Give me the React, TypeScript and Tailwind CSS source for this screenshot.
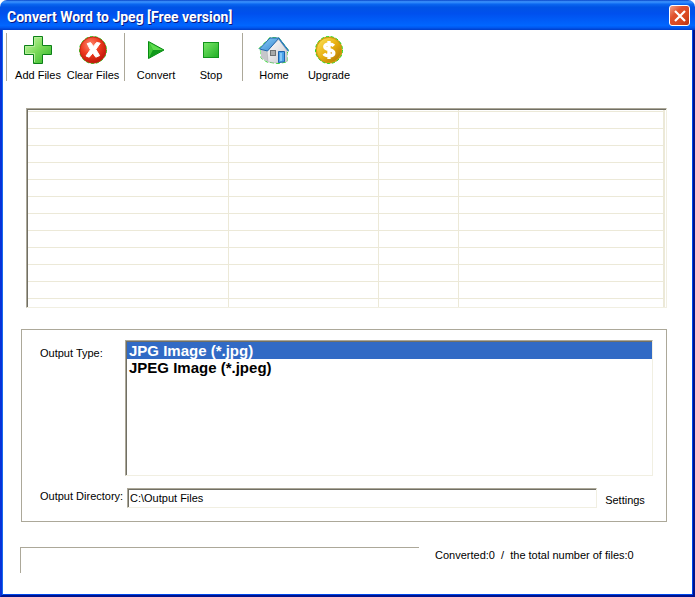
import { useState, type ReactNode } from "react";

function AddIcon() {
  return (
    <svg viewBox="0 0 28 28" className="h-7 w-7 shrink-0">
      <defs>
        <linearGradient id="add" x1="0" y1="0" x2="1" y2="1">
          <stop offset="0" stopColor="#d2f8b4" />
          <stop offset="0.5" stopColor="#7ada58" />
          <stop offset="1" stopColor="#2fb32a" />
        </linearGradient>
      </defs>
      <path d="M9.5.5h9v9h9v9h-9v9h-9v-9h-9v-9h9z" fill="url(#add)" stroke="#0c8018" />
      <path d="M10.5 26V17.5h-9v-7h9v-9h7" fill="none" stroke="#b4ee98" />
    </svg>
  );
}

function ClearIcon() {
  return (
    <svg viewBox="0 0 28 28" className="h-7 w-7 shrink-0">
      <defs>
        <radialGradient id="clear" cx="0.4" cy="0.3" r="0.75">
          <stop offset="0" stopColor="#ff8a70" />
          <stop offset="0.5" stopColor="#ee3a1e" />
          <stop offset="1" stopColor="#b91206" />
        </radialGradient>
      </defs>
      <circle cx="14" cy="14" r="13.5" fill="#c22a14" stroke="#1fdc1f" strokeDasharray="3 2" />
      <circle cx="14" cy="14" r="13" fill="url(#clear)" stroke="#c22a14" strokeWidth="0.8" />
      <path
        d="M8.2 7.6 11.6 6.6 14.4 10.4 17.6 6.4 21.2 7.2 16.8 13.4 20.6 19.6 16.8 21.2 13.8 17 10.2 21.2 7 20 11.4 13.8z"
        fill="#fff"
        stroke="#fff"
        strokeLinejoin="round"
      />
    </svg>
  );
}

function ConvertIcon() {
  return (
    <svg viewBox="0 0 28 28" className="h-7 w-7 shrink-0">
      <path d="M6.5 5.5 22 14 6.5 22.5z" fill="#28b428" stroke="#078a12" strokeLinejoin="round" />
      <path d="M7 6.5 11 14 20.5 14z" fill="#5fdc50" />
      <path d="M7 6.5v15L11 14z" fill="#43c93a" />
      <path d="M7 22 11 14h10z" fill="#119a1c" />
    </svg>
  );
}

function StopIcon() {
  return (
    <svg viewBox="0 0 28 28" className="h-7 w-7 shrink-0">
      <defs>
        <linearGradient id="stop" x1="0" y1="0" x2="1" y2="1">
          <stop offset="0" stopColor="#7be868" />
          <stop offset="1" stopColor="#1fae25" />
        </linearGradient>
      </defs>
      <rect x="6.5" y="6.5" width="15" height="15" fill="url(#stop)" stroke="#12941c" />
    </svg>
  );
}

function HomeIcon() {
  return (
    <svg viewBox="0 0 32 28" className="h-7 w-8 shrink-0">
      <defs>
        <linearGradient id="wall" x1="0" y1="0" x2="1" y2="1">
          <stop offset="0" stopColor="#ffffff" />
          <stop offset="1" stopColor="#c8c8cc" />
        </linearGradient>
        <linearGradient id="roof" x1="0" y1="0" x2="1" y2="1">
          <stop offset="0" stopColor="#8fd0fa" />
          <stop offset="1" stopColor="#3384cf" />
        </linearGradient>
      </defs>
      <path d="M1 12.5 12 1.5 21 2l10 13-2 2v9l-9 1.5L9 26l-6-4v-6.5z" fill="none" stroke="#1fdc1f" strokeDasharray="4 2" />
      <path d="M3 14v8l7 4V12z" fill="#c6c7ca" />
      <path d="M9 14 21 3.5l8 11.5v10.5L19 27l-9-1z" fill="url(#wall)" stroke="#a2a4a8" strokeWidth="0.5" />
      <path d="M1.5 13 12 2h9L9.5 15z" fill="url(#roof)" stroke="#2166aa" />
      <path d="m20.5 2 10 13" fill="none" stroke="#2a78bd" strokeWidth="1.4" />
      <rect x="12.5" y="14.5" width="5" height="5" fill="#a7a9a9" stroke="#6f7274" />
      <path d="M20.5 15.5h6v10.3l-6 .7z" fill="#4ba2ea" stroke="#1b62ad" />
      <path d="M22 17h2v8h-2z" fill="#86c8f8" />
    </svg>
  );
}

function UpgradeIcon() {
  return (
    <svg viewBox="0 0 28 28" className="h-7 w-7 shrink-0">
      <defs>
        <linearGradient id="coin" x1="0" y1="0" x2="1" y2="1">
          <stop offset="0" stopColor="#ffe860" />
          <stop offset="0.5" stopColor="#e8b010" />
          <stop offset="1" stopColor="#a86e00" />
        </linearGradient>
      </defs>
      <circle cx="14" cy="14" r="13.5" fill="#c99710" stroke="#1fdc1f" strokeDasharray="3 2" />
      <circle cx="14" cy="14" r="12.6" fill="url(#coin)" stroke="#d0a010" />
      <path
        d="M18.8 9.8C17 7.6 9.8 7.2 9.8 10.8c0 3.7 9 2 9 6.2 0 3.8-8 3.4-10 .8M14 5v18"
        fill="none"
        stroke="#fff"
        strokeWidth="3.4"
      />
    </svg>
  );
}

function ToolButton({ label, icon }: { label: string; icon: ReactNode }) {
  return (
    <button type="button" className="mr-px flex w-[54px] flex-col items-center pt-[3px] whitespace-nowrap">
      {icon}
      <span className="mt-[3px] leading-4">{label}</span>
    </button>
  );
}

function Separator() {
  return <div className="mr-1 h-12 w-px bg-[#aca899]" />;
}

const ROWS = Array.from({ length: 11 }, (_, i) => i);
const COLUMNS = [0, 1, 2, 3];
const cell = "border-r border-b border-[#ece9d8] p-0 last:border-r-2";
const sunken =
  "border border-t-[#aca899] border-l-[#aca899] border-r-[#f1efe2] border-b-[#f1efe2] shadow-[inset_1px_1px_0_#716f64]";

function FileList() {
  return (
    <div className={`${sunken} h-[200px] overflow-hidden pt-px pr-px pl-px`}>
      <table className="h-[205px] w-full table-fixed border-separate border-spacing-0">
        <colgroup>
          <col className="w-[201px]" />
          <col className="w-[150px]" />
          <col className="w-[80px]" />
          <col />
        </colgroup>
        <thead>
          <tr className="h-0.5">
            {COLUMNS.map((c) => (
              <th key={c} className={cell} />
            ))}
          </tr>
        </thead>
        <tbody>
          {ROWS.map((r) => (
            <tr key={r} className="h-[17px]">
              {COLUMNS.map((c) => (
                <td key={c} className={cell} />
              ))}
            </tr>
          ))}
          <tr>
            {COLUMNS.map((c) => (
              <td key={c} className={cell} />
            ))}
          </tr>
        </tbody>
      </table>
    </div>
  );
}

const option =
  "h-[17px] min-h-0 p-0 pl-0.5 font-bold leading-[17px] checked:bg-[linear-gradient(#316ac5,#316ac5)] checked:[-webkit-text-fill-color:white]";

function OutputPanel() {
  const [type, setType] = useState("jpg");
  const [dir, setDir] = useState("C:\\Output Files");

  return (
    <fieldset className="border border-[#aca899] pt-[10px] pr-[13px] pb-[13px] pl-[18px]">
      <div className="flex">
        <label htmlFor="type" className="w-[85px] shrink-0 pt-[5px] leading-4">
          Output Type:
        </label>
        <select
          id="type"
          size={8}
          value={type}
          onChange={(e) => setType(e.target.value)}
          className={`${sunken} h-[136px] min-w-0 flex-1 overflow-hidden rounded-none bg-white pt-px pl-px text-[15px] text-black outline-none`}
        >
          <option value="jpg" className={option}>JPG Image (*.jpg)</option>
          <option value="jpeg" className={option}>JPEG Image (*.jpeg)</option>
        </select>
      </div>
      <div className="mt-3 flex">
        <label htmlFor="dir" className="w-[87px] shrink-0 leading-4 whitespace-nowrap">
          Output Directory:
        </label>
        <input
          id="dir"
          type="text"
          value={dir}
          onChange={(e) => setDir(e.target.value)}
          className={`${sunken} h-5 min-w-0 flex-1 bg-white px-0.5 outline-none`}
        />
        <button type="button" className="h-5 w-14 pt-1 leading-4">
          Settings
        </button>
      </div>
    </fieldset>
  );
}

export default function App() {
  return (
    <div className="flex min-h-screen flex-col bg-white font-['Liberation_Sans',Arial,sans-serif] text-[11px] text-black">
      <header className="flex h-[30px] shrink-0 items-center justify-between rounded-t-[7px] bg-[linear-gradient(180deg,#0844c8,#3d95ff_6%,#0a66f0_14%,#0053e5_24%,#0050ee_45%,#0066ff_85%,#0058f0_92%,#003dc8)] pr-[5px] pl-[7px]">
        <h1 className="pt-1 font-[Roboto,sans-serif] text-sm font-bold text-white [text-shadow:1px_1px_0_#0a1883]">
          Convert Word to Jpeg [Free version]
        </h1>
        <button
          type="button"
          aria-label="Close"
          className="mt-px flex h-[21px] w-[21px] items-center justify-center rounded-[3px] border border-white bg-[linear-gradient(135deg,#f0a088,#e0502c_35%,#d84820_70%,#b83010)]"
        >
          <svg viewBox="0 0 12 12" className="h-3 w-3">
            <path d="M1 1l10 10M11 1L1 11" stroke="#fff" strokeWidth="2.2" />
          </svg>
        </button>
      </header>
      <main className="flex-1 border-x-2 border-b-2 border-l-[#0831d9] border-r-[#00138c] border-b-[#00138c] px-px pb-px shadow-[inset_1px_0_0_#166aee,inset_-1px_-1px_0_#0046e8]">
        <nav className="flex pt-[3px] pl-[3px]">
          <Separator />
          <ToolButton label="Add Files" icon={<AddIcon />} />
          <ToolButton label="Clear Files" icon={<ClearIcon />} />
          <div className="w-[3px]" />
          <Separator />
          <ToolButton label="Convert" icon={<ConvertIcon />} />
          <ToolButton label="Stop" icon={<StopIcon />} />
          <div className="w-[3px]" />
          <Separator />
          <ToolButton label="Home" icon={<HomeIcon />} />
          <ToolButton label="Upgrade" icon={<UpgradeIcon />} />
        </nav>
        <div className="mt-[25px] mr-[25px] ml-[23px]">
          <FileList />
        </div>
        <div className="mt-[21px] mr-[25px] ml-[18px]">
          <OutputPanel />
        </div>
        <footer className="mt-[25px] mr-[25px] ml-[17px] flex gap-4">
          <div className="h-[26px] flex-1 border-t border-l border-[#aca899]" />
          <p className="w-[232px] leading-4 whitespace-pre">Converted:0  /  the total number of files:0</p>
        </footer>
      </main>
    </div>
  );
}
